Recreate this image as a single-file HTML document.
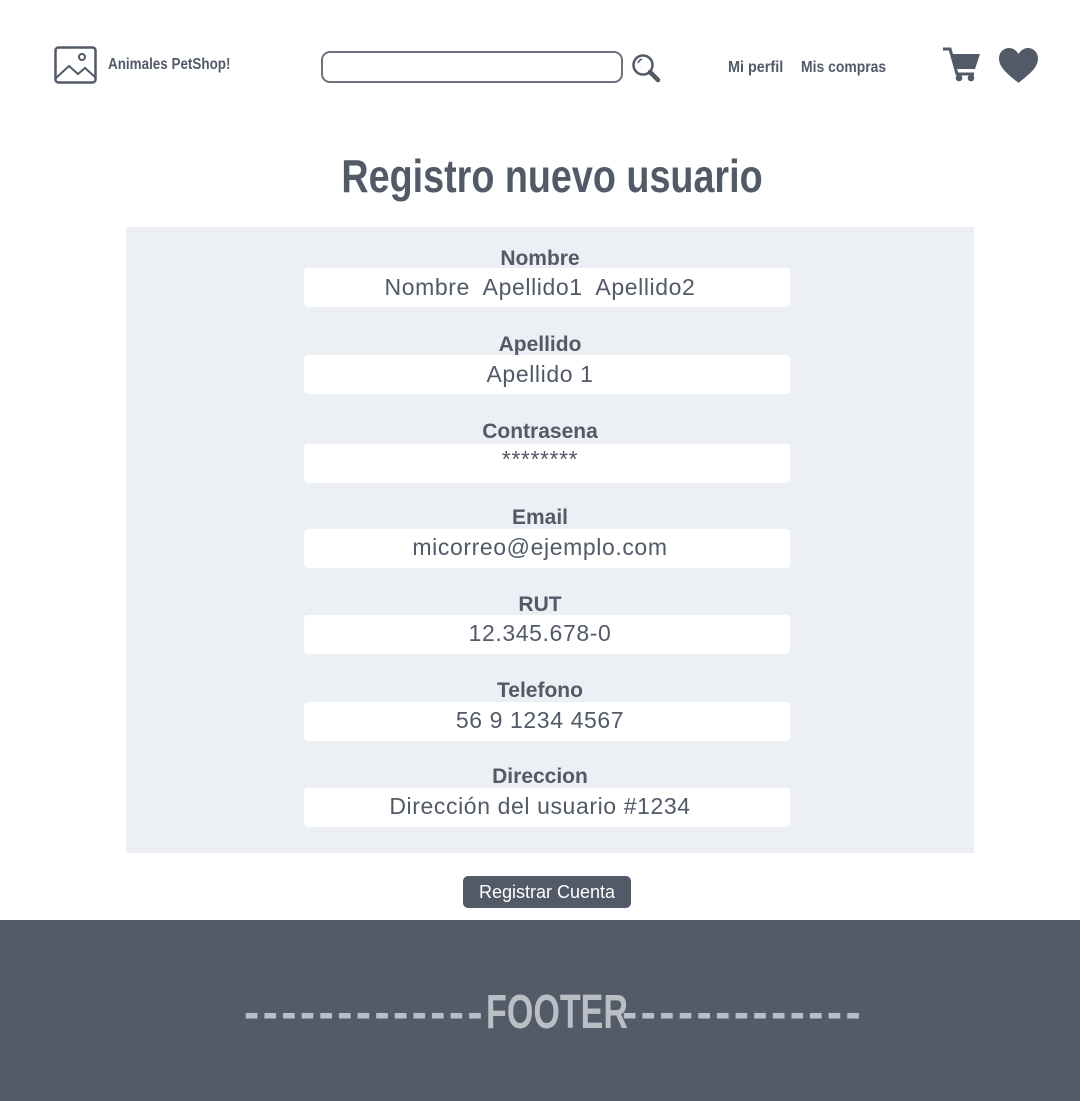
<!DOCTYPE html>
<html><head><meta charset="utf-8"><style>
body{margin:0;width:1080px;height:1101px;position:relative;background:#fff;font-family:"Liberation Sans",sans-serif;color:#525a68;overflow:hidden}
.a{position:absolute}
.cond{font-family:"Liberation Sans Narrow","Liberation Sans",sans-serif;font-weight:bold}
.lbl{position:absolute;left:304px;width:472px;text-align:center;font-weight:bold;font-size:21px;line-height:24px}
.inp{position:absolute;left:304px;width:486px;height:39px;background:#fff;border-radius:4px;text-align:center;font-size:23px;letter-spacing:.6px;line-height:38px;box-sizing:border-box;padding-right:14px}
</style></head><body>
<svg class="a" style="left:54px;top:46px" width="43" height="38" viewBox="0 0 43 38"><rect x="1.5" y="1.5" width="40" height="35" rx="3" fill="none" stroke="#525a68" stroke-width="2.5"/><circle cx="28" cy="11" r="3" fill="none" stroke="#525a68" stroke-width="2"/><path d="M2 32 L15 20 L24 28 L31 22 L41 31" fill="none" stroke="#525a68" stroke-width="2"/></svg>
<div class="a cond" style="left:108px;top:56px;font-size:16px;transform:scaleX(.84);transform-origin:left">Animales PetShop!</div>
<div class="a" style="left:321px;top:51px;width:302px;height:32px;border:2px solid #6b717d;border-radius:9px;box-sizing:border-box"></div>
<svg class="a" style="left:631px;top:53px" width="30" height="30" viewBox="0 0 30 30"><circle cx="12" cy="12" r="9.5" fill="none" stroke="#525a68" stroke-width="2.5"/><path d="M7 10 Q8 7 11 6" stroke="#525a68" stroke-width="1.5" fill="none"/><path d="M19 19 L27 27" stroke="#525a68" stroke-width="4.5" stroke-linecap="round"/></svg>
<div class="a cond" style="left:728px;top:59px;font-size:16px;transform:scaleX(.9);transform-origin:left">Mi perfil</div>
<div class="a cond" style="left:801px;top:59px;font-size:16px;transform:scaleX(.87);transform-origin:left">Mis compras</div>
<svg class="a" style="left:940px;top:45px" width="42" height="38" viewBox="0 0 42 38"><path d="M3 4 H10 L17 29 H34" fill="none" stroke="#525a68" stroke-width="3"/><path d="M11 9 H40 L35 24 H16 Z" fill="#525a68"/><circle cx="19" cy="33" r="3.3" fill="#525a68"/><circle cx="31" cy="33" r="3.3" fill="#525a68"/></svg>
<svg class="a" style="left:999px;top:48px" width="39" height="35" viewBox="0 0 39 35"><path d="M19.5 35 C10 27 0 20 0 10.5 C0 4 5 0 10 0 C14 0 17.5 2.5 19.5 6 C21.5 2.5 25 0 29 0 C34 0 39 4 39 10.5 C39 20 29 27 19.5 35 Z" fill="#525a68"/></svg>
<div class="a cond" style="left:0;width:1104px;text-align:center;top:149px;font-size:46px;transform:scaleX(.82);transform-origin:552px 0">Registro nuevo usuario</div>
<div class="a" style="left:126px;top:227px;width:848px;height:626px;background:#eceff3"></div>
<div class="lbl" style="top:247px">Nombre</div><div class="inp" style="top:268px">Nombre&nbsp; Apellido1&nbsp; Apellido2</div>
<div class="lbl" style="top:333px">Apellido</div><div class="inp" style="top:355px">Apellido 1</div>
<div class="lbl" style="top:420px">Contrasena</div><div class="inp" style="top:444px;line-height:30px">********</div>
<div class="lbl" style="top:506px">Email</div><div class="inp" style="top:529px;line-height:36px">micorreo@ejemplo.com</div>
<div class="lbl" style="top:593px">RUT</div><div class="inp" style="top:615px;line-height:36px">12.345.678-0</div>
<div class="lbl" style="top:679px">Telefono</div><div class="inp" style="top:702px;line-height:36px">56 9 1234 4567</div>
<div class="lbl" style="top:765px">Direccion</div><div class="inp" style="top:788px;line-height:36px">Dirección del usuario #1234</div>
<div class="a" style="left:463px;top:876px;width:168px;height:32px;background:#525a68;border-radius:5px;color:#fff;font-size:18px;line-height:32px;text-align:center">Registrar Cuenta</div>
<div class="a" style="left:0;top:920px;width:1080px;height:181px;background:#535a68"></div>
<div class="a cond" style="left:244px;top:985px;width:242px;overflow:hidden;color:#babec5;font-size:46px;letter-spacing:3.3px;white-space:nowrap">-------------</div>
<div class="a cond" style="left:486px;top:985px;color:#babec5;font-size:48px;white-space:nowrap;transform:scaleX(.71);transform-origin:left">FOOTER</div>
<div class="a cond" style="left:622px;top:985px;width:242px;overflow:hidden;color:#babec5;font-size:46px;letter-spacing:3.3px;white-space:nowrap">-------------</div>
</body></html>
